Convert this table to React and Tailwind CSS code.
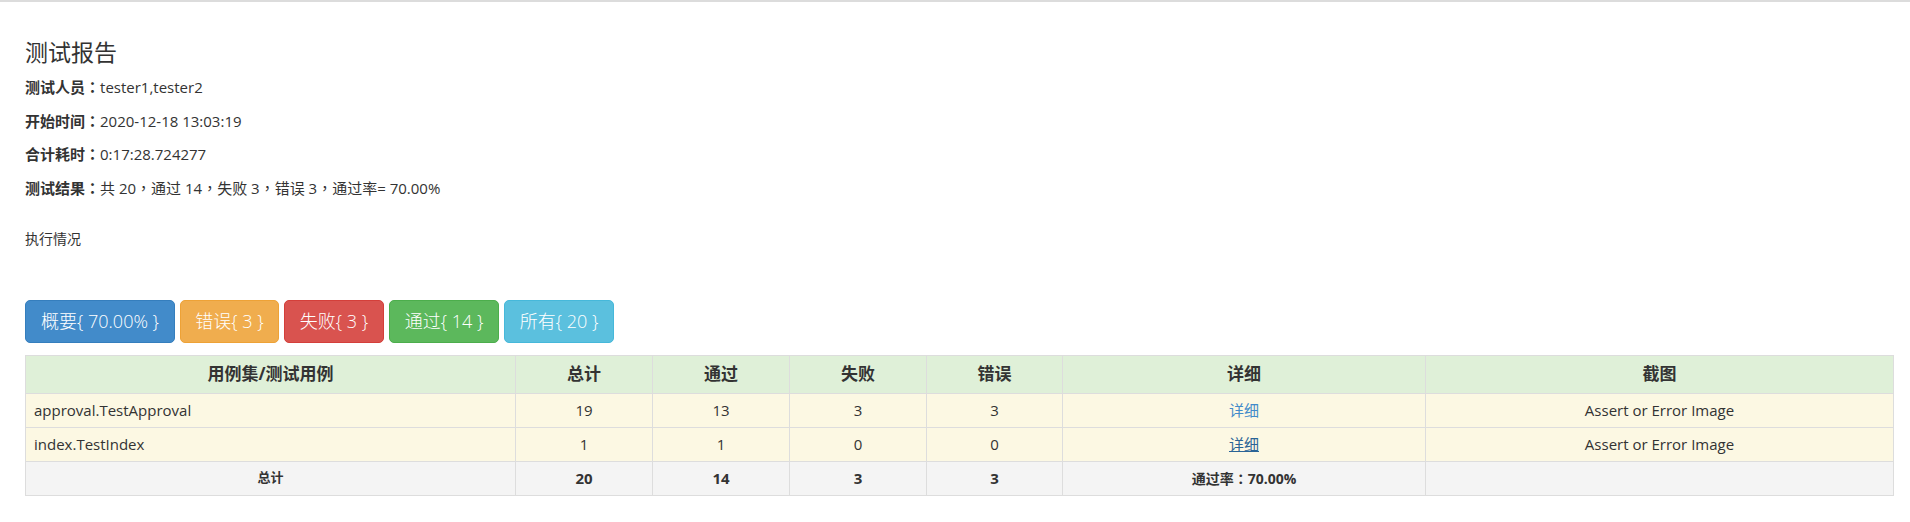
import React from "react";

const font = { fontFamily: '"Open Sans", "Noto Sans CJK SC", sans-serif' };

// full-width punctuation drawn centred, as the original font does
const P = ({ children }) => (
  <span style={{ fontFamily: '"Noto Sans CJK TC", sans-serif' }}>{children}</span>
);

const infoRows = [
  ["测试人员", <>tester1,tester2</>],
  ["开始时间", <>2020-12-18 13:03:19</>],
  ["合计耗时", <>0:17:28.724277</>],
  [
    "测试结果",
    <>
      共 20<P>，</P>通过 14<P>，</P>失败 3<P>，</P>错误 3<P>，</P>通过率= 70.00%
    </>,
  ],
];

const buttons = [
  { label: "概要{ 70.00% }", cls: "bg-[#428bca] border-[#357ebd] w-[150px]" },
  { label: "错误{ 3 }", cls: "bg-[#f0ad4e] border-[#eea236] w-[99px]" },
  { label: "失败{ 3 }", cls: "bg-[#d9534f] border-[#d43f3a] w-[100px]" },
  { label: "通过{ 14 }", cls: "bg-[#5cb85c] border-[#4cae4c] w-[110px]" },
  { label: "所有{ 20 }", cls: "bg-[#5bc0de] border-[#46b8da] w-[110px]" },
];

const rows = [
  { name: "approval.TestApproval", total: 19, pass: 13, fail: 3, error: 3, visited: false },
  { name: "index.TestIndex", total: 1, pass: 1, fail: 0, error: 0, visited: true },
];

export default function App() {
  return (
    <div className="w-[1910px] h-[522px] bg-white text-[#333] border-t-2 border-[#dcdcdc]" style={font}>
      <div className="pl-[25px] pr-[16px] pt-[33px]">
        {/* HEADER */}
        <h3 className="text-[23px] leading-[34px] font-normal">测试报告</h3>
        <div className="mt-[8px]">
          {infoRows.map(([k, v]) => (
            <p key={k} className="text-[15px] leading-[20px] mb-[13.5px]">
              <strong className="font-bold">
                {k}
                <P>：</P>
              </strong>
              {v}
            </p>
          ))}
        </div>
        <p className="text-[14px] leading-[20px] mt-[31px]">执行情况</p>

        {/* FILTER BUTTONS */}
        <div className="flex gap-[5px] mt-[51px]">
          {buttons.map((b) => (
            <button
              key={b.label}
              className={`h-[43px] rounded-[5px] border text-white text-[18px] font-light ${b.cls}`}
            >
              {b.label}
            </button>
          ))}
        </div>

        {/* TABLE */}
        <table className="mt-[12px] w-[1869px] table-fixed border-collapse border border-[#ddd] text-[15px]">
          <colgroup>
            <col className="w-[490px]" />
            <col className="w-[137px]" />
            <col className="w-[137px]" />
            <col className="w-[137px]" />
            <col className="w-[136px]" />
            <col className="w-[363px]" />
            <col />
          </colgroup>
          <thead>
            <tr className="bg-[#dff0d8] h-[38px] text-[17px] font-bold">
              {["用例集/测试用例", "总计", "通过", "失败", "错误", "详细", "截图"].map((h) => (
                <th key={h} className="border border-[#ddd] text-center">
                  {h}
                </th>
              ))}
            </tr>
          </thead>
          <tbody>
            {rows.map((r) => (
              <tr key={r.name} className="bg-[#fcf8e3] h-[34px]">
                <td className="border border-[#ddd] pl-[8px]">{r.name}</td>
                <td className="border border-[#ddd] text-center">{r.total}</td>
                <td className="border border-[#ddd] text-center">{r.pass}</td>
                <td className="border border-[#ddd] text-center">{r.fail}</td>
                <td className="border border-[#ddd] text-center">{r.error}</td>
                <td className="border border-[#ddd] text-center">
                  <a className={r.visited ? "text-[#2a6496] underline" : "text-[#428bca]"}>详细</a>
                </td>
                <td className="border border-[#ddd] text-center">Assert or Error Image</td>
              </tr>
            ))}
            <tr className="bg-[#f4f4f4] h-[34px] font-bold">
              <td className="border border-[#ddd] text-center text-[13px]">总计</td>
              <td className="border border-[#ddd] text-center">20</td>
              <td className="border border-[#ddd] text-center">14</td>
              <td className="border border-[#ddd] text-center">3</td>
              <td className="border border-[#ddd] text-center">3</td>
              <td className="border border-[#ddd] text-center text-[14px]">
                通过率<P>：</P>70.00%
              </td>
              <td className="border border-[#ddd]"></td>
            </tr>
          </tbody>
        </table>
      </div>
    </div>
  );
}
